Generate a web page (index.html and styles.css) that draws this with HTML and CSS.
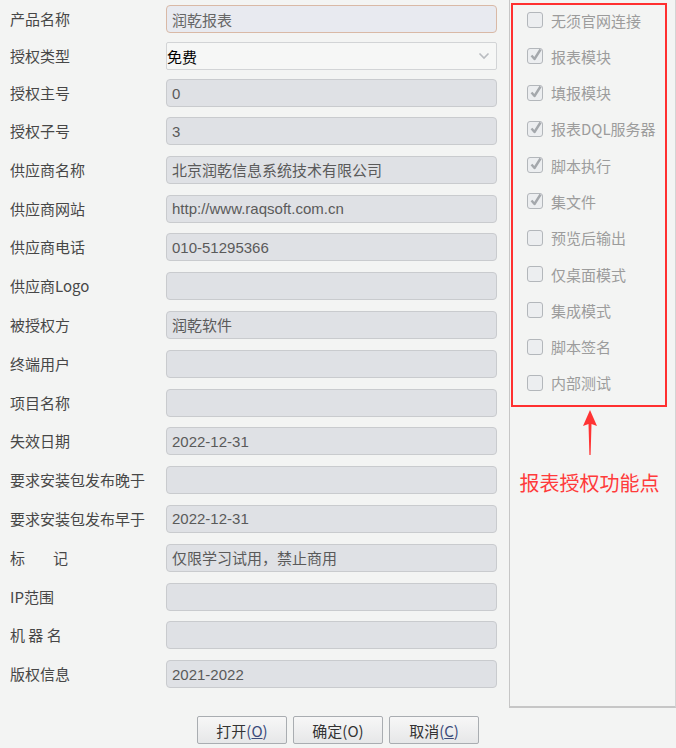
FILE: index.html
```html
<!DOCTYPE html>
<html lang="zh">
<head>
<meta charset="utf-8">
<title>授权</title>
<link rel="stylesheet" href="styles.css">
</head>
<body>
<div class="dialog">
  <div class="main">
    <div class="form">
      <div class="row r1"><span class="label">产品名称</span><div class="field focus">润乾报表</div></div>
      <div class="row r2"><span class="label">授权类型</span><div class="field select">免费<svg class="chev" width="12" height="8" viewBox="0 0 12 8"><path d="M1.5 1.5 L6 6 L10.5 1.5" fill="none" stroke="#b9bcc0" stroke-width="1.6"/></svg></div></div>
      <div class="row r3"><span class="label">授权主号</span><div class="field">0</div></div>
      <div class="row r4"><span class="label">授权子号</span><div class="field">3</div></div>
      <div class="row"><span class="label">供应商名称</span><div class="field">北京润乾信息系统技术有限公司</div></div>
      <div class="row"><span class="label">供应商网站</span><div class="field">http://www.raqsoft.com.cn</div></div>
      <div class="row"><span class="label">供应商电话</span><div class="field">010-51295366</div></div>
      <div class="row"><span class="label">供应商Logo</span><div class="field"></div></div>
      <div class="row"><span class="label">被授权方</span><div class="field">润乾软件</div></div>
      <div class="row"><span class="label">终端用户</span><div class="field"></div></div>
      <div class="row"><span class="label">项目名称</span><div class="field"></div></div>
      <div class="row"><span class="label">失效日期</span><div class="field">2022-12-31</div></div>
      <div class="row"><span class="label">要求安装包发布晚于</span><div class="field"></div></div>
      <div class="row"><span class="label">要求安装包发布早于</span><div class="field">2022-12-31</div></div>
      <div class="row"><span class="label spread"><span>标</span><span>记</span></span><div class="field">仅限学习试用，禁止商用</div></div>
      <div class="row"><span class="label">IP范围</span><div class="field"></div></div>
      <div class="row"><span class="label">机 器 名</span><div class="field"></div></div>
      <div class="row"><span class="label">版权信息</span><div class="field">2021-2022</div></div>
    </div>
    <div class="panel">
      <div class="redbox">
        <div class="cb"><span class="box"></span>无须官网连接</div>
        <div class="cb"><span class="box on"><svg width="16" height="16" viewBox="0 0 16 16"><path d="M3.5 8.5 L6.5 12 L12.5 2.5" fill="none" stroke="#a4a8ac" stroke-width="2.4" stroke-linejoin="round"/></svg></span>报表模块</div>
        <div class="cb"><span class="box on"><svg width="16" height="16" viewBox="0 0 16 16"><path d="M3.5 8.5 L6.5 12 L12.5 2.5" fill="none" stroke="#a4a8ac" stroke-width="2.4" stroke-linejoin="round"/></svg></span>填报模块</div>
        <div class="cb"><span class="box on"><svg width="16" height="16" viewBox="0 0 16 16"><path d="M3.5 8.5 L6.5 12 L12.5 2.5" fill="none" stroke="#a4a8ac" stroke-width="2.4" stroke-linejoin="round"/></svg></span>报表DQL服务器</div>
        <div class="cb"><span class="box on"><svg width="16" height="16" viewBox="0 0 16 16"><path d="M3.5 8.5 L6.5 12 L12.5 2.5" fill="none" stroke="#a4a8ac" stroke-width="2.4" stroke-linejoin="round"/></svg></span>脚本执行</div>
        <div class="cb"><span class="box on"><svg width="16" height="16" viewBox="0 0 16 16"><path d="M3.5 8.5 L6.5 12 L12.5 2.5" fill="none" stroke="#a4a8ac" stroke-width="2.4" stroke-linejoin="round"/></svg></span>集文件</div>
        <div class="cb"><span class="box"></span>预览后输出</div>
        <div class="cb"><span class="box"></span>仅桌面模式</div>
        <div class="cb"><span class="box"></span>集成模式</div>
        <div class="cb"><span class="box"></span>脚本签名</div>
        <div class="cb"><span class="box"></span>内部测试</div>
      </div>
      <svg class="arrow" width="20" height="48" viewBox="0 0 20 48"><path d="M10 2 L17 18 L11.5 16 L10.6 47 L9.4 47 L8.5 16 L3 18 Z" fill="#ff3333"/></svg>
      <div class="note">报表授权功能点</div>
    </div>
  </div>
  <div class="footer">
    <button class="btn">打开<span class="acc">(<u>O</u>)</span></button>
    <button class="btn">确定(O)</button>
    <button class="btn">取消<span class="acc">(<u>C</u>)</span></button>
  </div>
</div>
</body>
</html>
```
FILE: styles.css
```css
html, body {
  margin: 0;
  padding: 0;
  background: #f3f4f3;
}
body {
  font-family: "Noto Sans CJK SC", "Noto Sans", sans-serif;
  font-size: 15px;
  color: #3a3a3a;
}
.dialog {
  width: 676px;
  height: 748px;
  display: flex;
  flex-direction: column;
}
.main {
  display: flex;
  height: 708px;
}
.form {
  width: 509px;
  padding-left: 10px;
  box-sizing: border-box;
}
.row {
  display: flex;
  align-items: center;
  height: 28px;
  margin-top: 10.8px;
}
.row.r1 { margin-top: 5px; }
.row.r2, .row.r3 { margin-top: 9px; }
.row.r4 { margin-top: 10px; }
.label {
  width: 156px;
  flex: none;
  color: #474747;
  font-size: 15px;
  line-height: 20px;
  white-space: nowrap;
}
.label.spread {
  display: flex;
  gap: 28px;
}
.field {
  width: 331px;
  height: 28px;
  box-sizing: border-box;
  border: 1px solid #c9cbce;
  border-radius: 4px;
  background: #dfe1e5;
  color: #5a5a5a;
  padding: 0 5px;
  display: flex;
  align-items: center;
  font-size: 15px;
  font-family: "Liberation Sans", "Noto Sans CJK SC", sans-serif;
  white-space: nowrap;
}
.field.focus {
  background: #e8eaf0;
  border-color: #d9b9a6;
  color: #666;
  font-family: "Noto Sans CJK SC", sans-serif;
}
.field.select {
  background: #f6f7f6;
  border-color: #d2d4d6;
  border-radius: 2px;
  color: #000;
  padding-left: 0;
  justify-content: space-between;
  padding-right: 6px;
  font-family: "Noto Sans CJK SC", sans-serif;
}
.chev { flex: none; }
.panel {
  width: 167px;
  height: 708px;
  box-sizing: border-box;
  border-left: 1px solid #c6c6c6;
  border-right: 1px solid #d4d4d4;
  border-bottom: 2px solid #c6c6c6;
  display: flex;
  flex-direction: column;
  align-items: center;
}
.redbox {
  align-self: flex-start;
  margin-left: 1px;
  margin-top: 3px;
  width: 156px;
  height: 404px;
  box-sizing: border-box;
  border: 2px solid #ff3030;
  padding: 3px 0 0 14px;
}
.cb {
  display: flex;
  align-items: center;
  height: 24px;
  margin-bottom: 12.3px;
  color: #9c9c9c;
  font-size: 15px;
  white-space: nowrap;
}
.box {
  width: 16px;
  height: 16px;
  box-sizing: border-box;
  border: 1px solid #b3b7bb;
  border-radius: 3px;
  background: #eceef0;
  margin-right: 8px;
  flex: none;
  position: relative;
}
.box.on svg {
  position: absolute;
  left: 0;
  top: -2px;
}
.arrow {
  margin-top: 1px;
  margin-left: -6px;
}
.note {
  margin-top: 12px;
  color: #ff3b3b;
  font-size: 20px;
  margin-left: -6px;
  white-space: nowrap;
}
.footer {
  display: flex;
  justify-content: center;
  gap: 6px;
  padding-top: 8px;
  padding-left: 0;
}
.btn {
  width: 90px;
  height: 28px;
  border: 1px solid #a9adb1;
  border-radius: 2px;
  background: linear-gradient(#f7f7f7, #e6e7e8);
  font-family: "Noto Sans CJK SC", sans-serif;
  font-size: 15px;
  color: #333;
  padding: 0;
  display: flex;
  align-items: center;
  justify-content: center;
}
.acc { color: #3a4a7a; }
```
